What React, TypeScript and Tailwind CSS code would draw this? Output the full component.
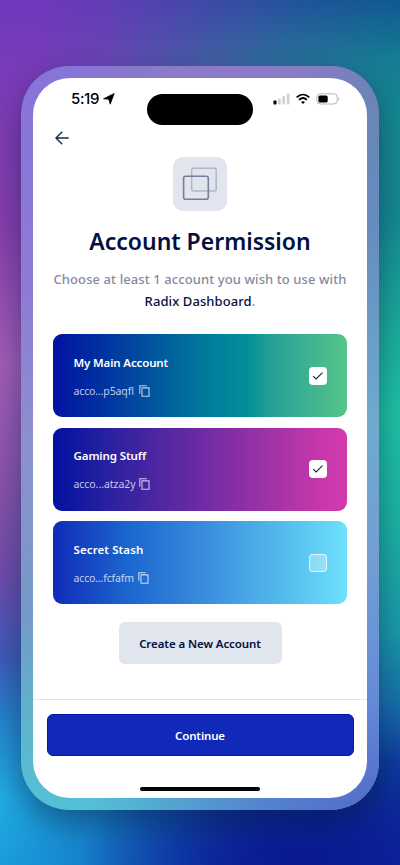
import React from "react";

type Account = { name: string; address: string; background: string; checked: boolean; nameClass: string; addressClass: string };

const accounts: Account[] = [
  { name: "My Main Account", address: "acco...p5aqfl", checked: true, background: "bg-[linear-gradient(90deg,#0112a2_0%,#00489e_28%,#00779c_50%,#008f98_66%,#26a097_74%,#55c58a_100%)]", nameClass: "tracking-[-0.14px]", addressClass: "w-[61px] tracking-[-0.13px]" },
  { name: "Gaming Stuff", address: "acco...atza2y", checked: true, background: "bg-[linear-gradient(90deg,#0111a1_0%,#25209f_17%,#ca38ab_93%,#d33aac_100%)]", nameClass: "tracking-[-0.1px]", addressClass: "w-[61.5px] tracking-[-0.05px]" },
  { name: "Secret Stash", address: "acco...fcfafm", checked: false, background: "bg-[linear-gradient(90deg,#102bb8_0%,#1b65ce_25%,#3989dc_50%,#50b6eb_75%,#6de0fc_100%)]", nameClass: "tracking-[0.1px]", addressClass: "w-[60px] tracking-[-0.15px]" },
];

function CopyIcon() {
  return (
    <svg className="h-3 w-[11px] shrink-0" viewBox="0 0 11 12" fill="none" stroke="currentColor" strokeWidth="1.1">
      <path d="M.8 8.8V.8h7" />
      <path d="M3 2.9h7v8.3H3z" />
    </svg>
  );
}

function AccountCard({ account }: { account: Account }) {
  return (
    <div className={`flex h-[83px] items-center justify-between rounded-[9px] pl-[20.5px] pr-5 text-white ${account.background}`}>
      <div className="pt-[2px]">
        <div className={`text-[11.5px] leading-4 font-semibold whitespace-nowrap ${account.nameClass}`}>{account.name}</div>
        <div className="mt-3 flex items-center gap-1 text-white/75">
          <span className={`text-[10.5px] leading-4 whitespace-nowrap ${account.addressClass}`}>{account.address}</span>
          <CopyIcon />
        </div>
      </div>
      {account.checked ? (
        <div className="flex size-[18px] items-center justify-center rounded-[4px] bg-white">
          <svg viewBox="0 0 12 10" className="h-[10px] w-3" fill="none" stroke="#17233f" strokeWidth="1.1"><path d="M1.2 5.2 4.1 8 10.5 1.7" /></svg>
        </div>
      ) : (
        <div className="size-[18px] rounded-[4px] border-[1.5px] border-white/70 bg-white/30" />
      )}
    </div>
  );
}

export default function App() {
  return (
    <main className="relative isolate h-[865px] w-[400px] overflow-hidden px-[21px] pt-[66px] font-['Noto_Sans','Open_Sans',sans-serif] text-[#03103f]">
      <div className="absolute inset-0 -z-10 bg-[linear-gradient(180deg,#7038bd_0%,#803eb5_15%,#863fae_26%,#a35fb9_42%,#8a53ad_57%,#704cae_67%,#405bbb_76%,#2786d0_83%,#22b4e8_92%,#1ba2df_100%)]" />
      <div className="absolute inset-0 -z-10 bg-[linear-gradient(180deg,#0d5a91_0%,#127f90_7%,#138b91_14%,#138c94_25%,#1baf9c_38%,#1fc5a6_48%,#1db4a5_61%,#1b9baa_73%,#1872ad_81%,#0e3e9e_88%,#0b289b_100%)] [mask-image:linear-gradient(94deg,transparent_8%,rgba(0,0,0,.18)_25%,rgba(0,0,0,.5)_45%,rgba(0,0,0,.8)_65%,black_90%)]" />
      <div className="absolute inset-0 -z-10 bg-[radial-gradient(ellipse_220px_120px_at_300px_865px,#0a188f_0%,#0b1c94cc_35%,#0d249800_100%)]" />
      <div className="relative flex h-[744px] w-[358px] flex-col overflow-visible rounded-[48px] px-3 py-3 shadow-[0_14px_32px_rgba(5,20,55,.46)]">
        <div className="absolute inset-0 -z-10 rounded-[48px] bg-[linear-gradient(180deg,#8774d8_0%,#8c7bd6_30%,#8c91cd_52%,#739bc7_74%,#60b3cb_88%,#53c1d6_100%)]" />
        <div className="absolute inset-0 -z-10 rounded-[48px] bg-[linear-gradient(180deg,#6f83b5_0%,#6788b8_10%,#668dbd_22%,#6eabcd_48%,#739ed1_66%,#658cd7_84%,#5369ca_100%)] [mask-image:linear-gradient(90deg,transparent_20%,rgba(0,0,0,.75)_70%,black_100%)]" />
        <div className="absolute inset-0 -z-10 rounded-[48px] bg-[radial-gradient(ellipse_150px_60px_at_210px_0px,#8d7ac8_0%,#8d7ac8cc_50%,#8d7ac800_100%)]" />
        <section className="relative flex h-[720px] w-[334px] flex-col items-center overflow-hidden rounded-[37px] bg-white">
          <header className="relative flex h-[47px] w-full items-start justify-between pl-[38px] pr-[27px] pt-[12px] text-black">
            <div className="flex h-[18px] items-center gap-[4px]">
              <span className="font-['Inter',sans-serif] text-[15px] leading-[18px] font-medium tracking-[-0.35px]">5:19</span>
              <svg className="size-[12px]" viewBox="0 0 12 12"><path d="M11.2.5 7.2 11.2 5.9 6.3.6 5.8Z" fill="black" stroke="black" strokeWidth=".8" strokeLinejoin="round" /></svg>
            </div>
            <div className="absolute left-[114px] top-[16px] h-[31px] w-[106px] rounded-full bg-black" />
            <div className="flex h-[17px] items-center gap-[6px]">
              <svg className="h-3 w-[17px]" viewBox="0 0 17 12">
                <rect x=".5" y="7.5" width="3" height="4" rx=".7" fill="black" />
                <g fill="#d0d0d0"><rect x="5" y="5.4" width="2.7" height="6.1" rx=".7" /><rect x="9.4" y="3" width="2.7" height="8.5" rx=".7" /><rect x="13.8" y=".7" width="2.7" height="10.8" rx=".7" /></g>
              </svg>
              <svg className="h-3 w-[14px]" viewBox="0 0 14 12" fill="none" stroke="black" strokeWidth="1.8"><path d="M.7 4.3C4.5.6 9.5.6 13.3 4.3M3 6.9c2.4-2.2 5.6-2.2 8 0" /><path d="m7 11-2-2.1c1.1-1 2.9-1 4 0Z" fill="black" stroke="none" /></svg>
              <svg className="h-3 w-6" viewBox="0 0 24 12"><rect x=".8" y=".8" width="20.4" height="10.2" rx="3.2" fill="none" stroke="#b7b7b7" /><rect x="2.4" y="2.4" width="9.3" height="7" rx="1.5" fill="black" /><path d="M22.3 4c1.4.6 1.4 3.2 0 3.8Z" fill="#b7b7b7" /></svg>
            </div>
          </header>
          <div className="flex h-[32px] w-full items-start pl-[22px] pt-[6px]">
            <svg className="h-[14px] w-[14px]" viewBox="0 0 14 14" fill="none" stroke="#1b294f" strokeWidth="1.4"><path d="M13.7 7H1M7.2.8 1 7l6.2 6.2" /></svg>
          </div>
          <div className="flex size-[54px] shrink-0 items-center justify-center rounded-[10px] bg-[#e1e5ed]">
            <svg className="h-[34px] w-[36px]" viewBox="0 0 36 34" fill="none"><rect x="9.7" y="1.3" width="24.5" height="22.6" rx="2" stroke="#b1b5c6" strokeWidth="1.5" /><rect x="1.6" y="9.2" width="24.7" height="23" rx="2" stroke="#787d9c" strokeWidth="1.6" /></svg>
          </div>
          <h1 className="mt-[14px] text-[23px] leading-8 font-semibold tracking-[-0.01px] whitespace-nowrap">Account Permission</h1>
          <p className="mt-[11px] text-center text-[13px] leading-[22px] font-medium tracking-[0.09px] whitespace-nowrap text-[#858a9f]">Choose at least 1 account you wish to use with<br /><span className="text-[#03103f]">Radix Dashboard</span>.</p>
          <div className="mt-[22px] flex w-[294px] flex-col gap-[10.5px]">
            {accounts.map((account) => <AccountCard key={account.name} account={account} />)}
          </div>
          <button className="mt-[18px] h-[42px] w-[163px] shrink-0 rounded-[6px] bg-[#e1e5ed] pt-px text-[11.5px] leading-4 font-semibold tracking-[-0.09px] whitespace-nowrap">Create a New Account</button>
          <footer className="mt-[35px] flex w-full flex-col items-center border-t border-[#e4e4e7] pt-[14px]">
            <button className="h-[42px] w-[307px] rounded-[6px] border border-[#0715b0] bg-[#1029b9] pt-px text-[11.5px] leading-4 font-semibold tracking-[-0.15px] text-white">Continue</button>
            <div className="mt-[31px] h-[4px] w-[120px] rounded-full bg-black" />
          </footer>
        </section>
      </div>
    </main>
  );
}
